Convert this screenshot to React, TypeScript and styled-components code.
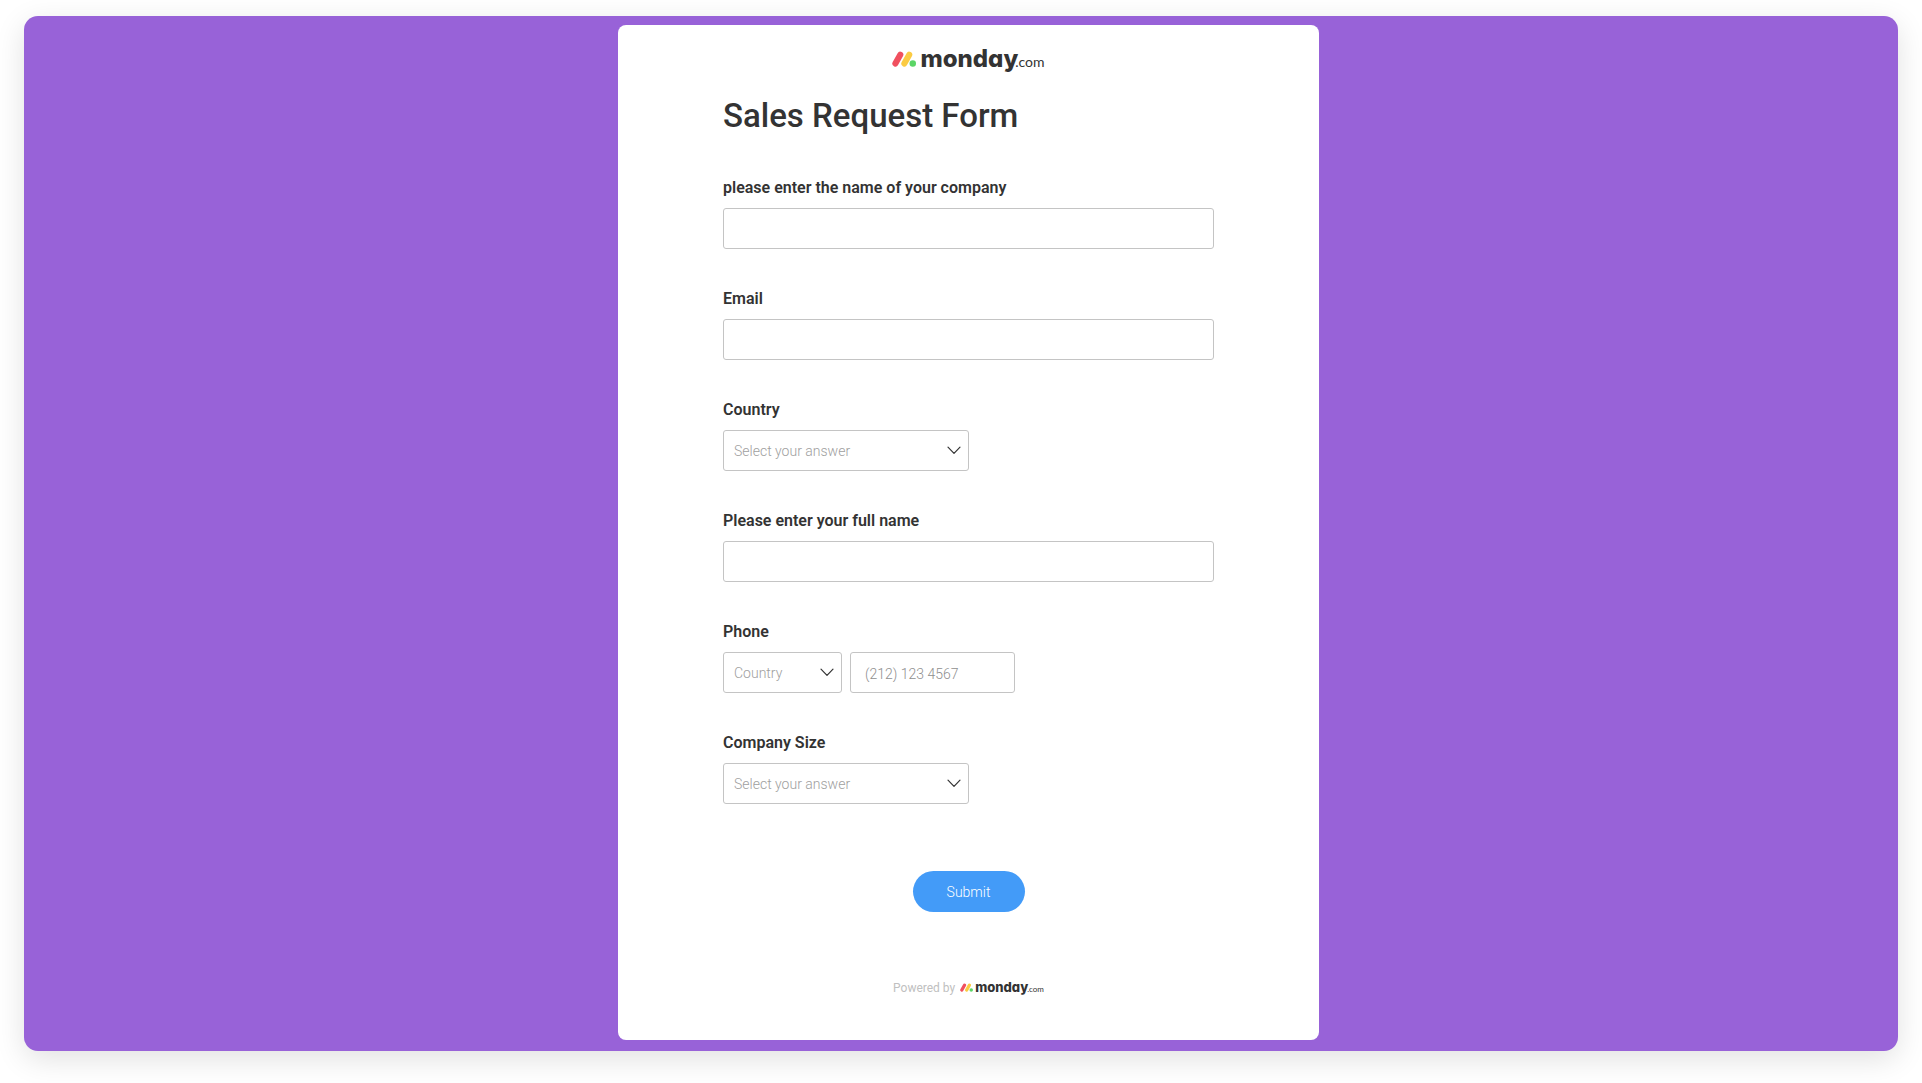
import React, { useId } from "react";
import styled, { createGlobalStyle } from "styled-components";

const GlobalStyle = createGlobalStyle`
  * { box-sizing: border-box; }
  body {
    margin: 0;
    background: #ffffff;
    color: #333333;
    font-family: Roboto, "Liberation Sans", sans-serif;
  }
`;

const Page = styled.div`
  display: flex;
  min-height: 100vh;
  padding: 16px 24px 32px;
`;

const Backdrop = styled.main`
  flex: 1;
  display: flex;
  justify-content: center;
  padding: 9px 0 11px 15px;
  border-radius: 14px;
  background: #9862d8;
  box-shadow: 0 8px 30px rgba(0, 0, 0, 0.12);
`;

const Card = styled.section`
  display: flex;
  flex-direction: column;
  width: 100%;
  max-width: 701px;
  padding: 18px 105px 40px;
  border-radius: 8px;
  background: #ffffff;
`;

const Header = styled.header`
  display: flex;
  flex-direction: column;
`;

const LogoRow = styled.div`
  display: flex;
  justify-content: center;
`;

const Title = styled.h1`
  margin: 16px 0 0;
  font-size: 33px;
  line-height: 44px;
  font-weight: 500;
`;

const Form = styled.form`
  display: flex;
  flex-direction: column;
  gap: 40px;
  margin-top: 40px;
`;

const Field = styled.div`
  display: flex;
  flex-direction: column;
  gap: 10px;
`;

const Label = styled.label`
  font-size: 16px;
  line-height: 20px;
  font-weight: 600;
`;

const Controls = styled.div`
  display: flex;
  gap: 8px;
`;

const TextInput = styled.input<{ $width?: string }>`
  width: ${(p) => p.$width ?? "100%"};
  height: 41px;
  padding: 2px 14px 0;
  border: 1px solid #c4c4c4;
  border-radius: 3px;
  background: #ffffff;
  color: #333333;
  font: 300 14px Roboto, "Liberation Sans", sans-serif;
  &::placeholder { color: #8f8f8f; opacity: 1; }
`;

const SelectBox = styled.div<{ $width: string }>`
  display: grid;
  align-items: center;
  width: ${(p) => p.$width};
  > * { grid-area: 1 / 1; }
`;

const NativeSelect = styled.select`
  appearance: none;
  width: 100%;
  height: 41px;
  padding: 0 30px 0 10px;
  border: 1px solid #c4c4c4;
  border-radius: 3px;
  background: #ffffff;
  color: #a0a0a0;
  font: 300 14px Roboto, "Liberation Sans", sans-serif;
`;

const Chevron = styled.svg`
  justify-self: end;
  width: 14px;
  height: 9px;
  margin-right: 8px;
  pointer-events: none;
`;

const Submit = styled.button`
  align-self: center;
  width: 112px;
  height: 41px;
  margin-top: 27px;
  border: 0;
  border-radius: 21px;
  background: #439bf8;
  color: #ffffff;
  font: 300 14px Roboto, "Liberation Sans", sans-serif;
`;

const Footer = styled.footer`
  display: flex;
  justify-content: center;
  align-items: baseline;
  gap: 5px;
  margin-top: 65px;
  color: #c0c0c0;
  font-size: 12px;
  line-height: 20px;
  font-weight: 400;
`;

const Brand = styled.a<{ $small?: boolean }>`
  display: flex;
  align-items: baseline;
  color: #333333;
  text-decoration: none;
  line-height: ${(p) => (p.$small ? 20 : 32)}px;
  > svg {
    width: ${(p) => (p.$small ? 13 : 24)}px;
    height: ${(p) => (p.$small ? 9 : 16)}px;
    margin-right: ${(p) => (p.$small ? 2 : 4)}px;
  }
`;

const BrandName = styled.span<{ $small?: boolean }>`
  font-family: Inter, Lato, sans-serif;
  font-feature-settings: "cv11";
  font-weight: 800;
  font-size: ${(p) => (p.$small ? 13 : 24)}px;
`;

const BrandSuffix = styled.span<{ $small?: boolean }>`
  font-family: Lato, sans-serif;
  font-weight: 400;
  font-size: ${(p) => (p.$small ? 8 : 14)}px;
  margin-left: ${(p) => (p.$small ? -1 : -3)}px;
`;

function Logo({ small }: { small?: boolean }) {
  return (
    <Brand href="#" $small={small}>
      <svg viewBox="0 0 71 47" aria-hidden="true">
        <g fill="none" strokeWidth="18" strokeLinecap="round">
          <path d="M10 37 24.5 11" stroke="#f0505f" />
          <path d="M36.5 37 51 11" stroke="#fbcb43" />
        </g>
        <circle cx="61.5" cy="37" r="9.5" fill="#5bd566" />
      </svg>
      <BrandName $small={small}>monday</BrandName>
      <BrandSuffix $small={small}>.com</BrandSuffix>
    </Brand>
  );
}

function TextField({ label, type = "text" }: { label: string; type?: string }) {
  const id = useId();
  return (
    <Field>
      <Label htmlFor={id}>{label}</Label>
      <TextInput id={id} type={type} />
    </Field>
  );
}

type SelectProps = { id?: string; width: string; prompt: string; options: string[]; "aria-label"?: string };

function Select({ width, prompt, options, ...rest }: SelectProps) {
  return (
    <SelectBox $width={width}>
      <NativeSelect defaultValue="" {...rest}>
        <option value="">{prompt}</option>
        {options.map((o) => (
          <option key={o}>{o}</option>
        ))}
      </NativeSelect>
      <Chevron viewBox="0 0 14 9" aria-hidden="true">
        <path d="M1 1.2 7 7.4 13 1.2" fill="none" stroke="#333333" strokeWidth="1.2" strokeLinecap="round" strokeLinejoin="round" />
      </Chevron>
    </SelectBox>
  );
}

function SelectField({ label, options }: { label: string; options: string[] }) {
  const id = useId();
  return (
    <Field>
      <Label htmlFor={id}>{label}</Label>
      <Select id={id} width="50%" prompt="Select your answer" options={options} />
    </Field>
  );
}

function PhoneField() {
  const id = useId();
  return (
    <Field>
      <Label htmlFor={id}>Phone</Label>
      <Controls>
        <Select width="119px" prompt="Country" options={[]} aria-label="Phone country" />
        <TextInput id={id} type="tel" $width="165px" placeholder="(212) 123 4567" />
      </Controls>
    </Field>
  );
}

export default function App() {
  return (
    <>
      <GlobalStyle />
      <Page>
        <Backdrop>
          <Card>
            <Header>
              <LogoRow>
                <Logo />
              </LogoRow>
              <Title>Sales Request Form</Title>
            </Header>
            <Form onSubmit={(e) => e.preventDefault()}>
              <TextField label="please enter the name of your company" />
              <TextField label="Email" type="email" />
              <SelectField label="Country" options={[]} />
              <TextField label="Please enter your full name" />
              <PhoneField />
              <SelectField label="Company Size" options={[]} />
              <Submit type="submit">Submit</Submit>
            </Form>
            <Footer>
              <span>Powered by</span>
              <Logo small />
            </Footer>
          </Card>
        </Backdrop>
      </Page>
    </>
  );
}
